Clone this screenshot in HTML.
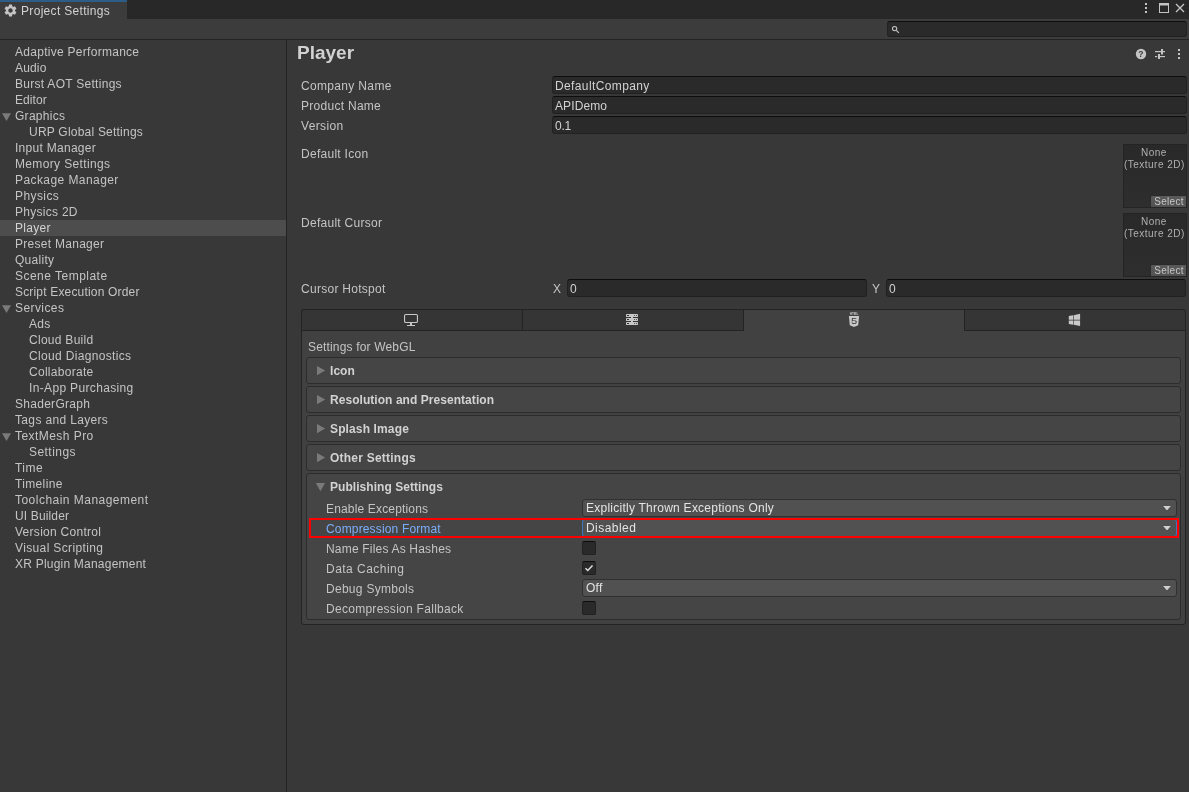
<!DOCTYPE html>
<html>
<head>
<meta charset="utf-8">
<title>Project Settings</title>
<style>
*{box-sizing:border-box;margin:0;padding:0}
html,body{width:1189px;height:792px;overflow:hidden;background:#383838}
body{will-change:transform;font-family:"Liberation Sans",sans-serif;font-size:12px;letter-spacing:.28px;color:#c4c4c4;position:relative}
.abs{position:absolute}
.t{position:absolute;white-space:nowrap;line-height:16px;height:16px}
/* dock tab bar */
#tabbar{left:0;top:0;width:1189px;height:19px;background:#282828}
#tab{left:0;top:0;width:127px;height:20px;background:#3c3c3c;border-top:2px solid #2c5d87}
#toolbar{left:0;top:19px;width:1189px;height:20px;background:#3c3c3c}
#hline{left:0;top:39px;width:1189px;height:1px;background:#232323}
#vline{left:286px;top:40px;width:1px;height:752px;background:#232323}
/* sidebar */
.si{left:15px;color:#c4c4c4}
.si.c{left:29px}
#sel{left:0;top:220px;width:286px;height:16px;background:#4d4d4d}
.arr{position:absolute;width:9px;height:7.800px;background:#7a7a7a;clip-path:polygon(0 0,100% 0,50% 100%)}
/* fields */
.tf{position:absolute;height:18px;background:#2a2a2a;border:1px solid #212121;border-top-color:#0d0d0d;border-radius:3px;color:#d2d2d2;line-height:16px;padding-left:2px;padding-top:1px;white-space:nowrap}
.lb{color:#c4c4c4}
.obj{position:absolute;width:64px;height:64px;background:linear-gradient(#292929,#2e2e2e);border:1px solid #242424;font-size:10px;letter-spacing:.48px;color:#b0b0b0;text-align:center;line-height:12px;padding-top:2.200px;padding-right:2px;white-space:nowrap}
.selb{position:absolute;right:0;bottom:0;width:36px;height:12px;background:linear-gradient(#5a5a5a,#525252);border:1px solid #2a2a2a;border-right:none;border-bottom:none;font-size:10px;line-height:11px;color:#c6c6c6;text-align:center;letter-spacing:.3px;border-radius:2px 0 0 0;padding-left:1px}
/* platform panel */
#panel{left:301px;top:309px;width:885px;height:316px;background:#414141;border:1px solid #232323;border-radius:3px}
.ptab{position:absolute;top:309px;height:22px;background:#353535;border:1px solid #232323}
.fold{position:absolute;left:306px;width:875px;height:27px;background:#454545;border:1px solid #2c2c2c;border-radius:3px}
.ft{font-weight:bold;letter-spacing:.05px;color:#d2d2d2;left:330px}
.rarr{position:absolute;width:8.200px;height:9.200px;background:#7a7a7a;clip-path:polygon(0 0,100% 50%,0 100%)}
.dd{position:absolute;left:582px;width:595px;height:18px;background:#515151;border:1px solid #303030;border-radius:3px;color:#e4e4e4;line-height:16px;padding-left:3px;white-space:nowrap}
.dd:after{content:"";position:absolute;right:5px;top:5.800px;width:8px;height:4.600px;background:#d0d0d0;clip-path:polygon(0 0,100% 0,50% 100%)}
.cb{position:absolute;left:582px;width:14px;height:14px;background:#2a2a2a;border:1px solid #212121;border-top-color:#0d0d0d;border-radius:2px}
.pl{left:326px;color:#c4c4c4}
</style>
</head>
<body>
<div class="abs" id="tabbar"></div>
<div class="abs" id="tab"></div>
<div class="abs" id="toolbar"></div>
<div class="abs" id="hline"></div>
<div class="abs" id="vline"></div>

<!-- tab title -->
<svg class="abs" style="left:3.400px;top:2.500px" width="15" height="15" viewBox="0 0 24 24"><path fill="#c4c4c4" d="M19.14 12.94c.04-.3.06-.61.06-.94 0-.32-.02-.64-.07-.94l2.03-1.58a.49.49 0 0 0 .12-.61l-1.92-3.32a.488.488 0 0 0-.59-.22l-2.39.96c-.5-.38-1.03-.7-1.62-.94l-.36-2.54a.484.484 0 0 0-.48-.41h-3.84c-.24 0-.43.17-.47.41l-.36 2.54c-.59.24-1.13.57-1.62.94l-2.39-.96c-.22-.08-.47 0-.59.22L2.74 8.87c-.12.21-.08.47.12.61l2.03 1.58c-.05.3-.09.63-.09.94s.02.64.07.94l-2.03 1.58a.49.49 0 0 0-.12.61l1.92 3.32c.12.22.37.29.59.22l2.39-.96c.5.38 1.03.7 1.62.94l.36 2.54c.05.24.24.41.48.41h3.84c.24 0 .44-.17.47-.41l.36-2.54c.59-.24 1.13-.56 1.62-.94l2.39.96c.22.08.47 0 .59-.22l1.92-3.32c.12-.22.07-.47-.12-.61l-2.01-1.58zM12 15.6c-1.98 0-3.600-1.620-3.600-3.600s1.620-3.600 3.600-3.600 3.600 1.620 3.600 3.600-1.620 3.600-3.600 3.600z"/></svg>
<div class="t" style="left:21px;top:3px;color:#d2d2d2;letter-spacing:.32px">Project Settings</div>

<!-- window buttons -->
<svg class="abs" style="left:1140px;top:0" width="49" height="18" viewBox="0 0 49 18">
<g fill="#c4c4c4"><rect x="5" y="3" width="2" height="2"/><rect x="5" y="7" width="2" height="2"/><rect x="5" y="11" width="2" height="2"/></g>
<rect x="19.500" y="3.500" width="9" height="9" fill="none" stroke="#c4c4c4"/><rect x="19" y="3" width="10" height="2.500" fill="#c4c4c4"/>
<path d="M36 4l8 8M44 4l-8 8" stroke="#c4c4c4" stroke-width="1.300" fill="none"/>
</svg>

<!-- search -->
<div class="abs" style="left:887px;top:21px;width:300px;height:16px;background:#2a2a2a;border:1px solid #212121;border-top-color:#0d0d0d;border-radius:3px"></div>
<svg class="abs" style="left:891px;top:25px" width="10" height="10" viewBox="0 0 10 10"><circle cx="3.600" cy="3.600" r="2.150" fill="none" stroke="#c4c4c4" stroke-width="1.100"/><path d="M5.300 5.300L7.900 7.900" stroke="#c4c4c4" stroke-width="1.200"/></svg>

<!-- sidebar -->
<div class="abs" id="sel"></div>
<div class="t si" style="top:44px">Adaptive Performance</div>
<div class="t si" style="top:60px;letter-spacing:0.155px">Audio</div>
<div class="t si" style="top:76px">Burst AOT Settings</div>
<div class="t si" style="top:92px;letter-spacing:0.060px">Editor</div>
<div class="arr" style="left:2px;top:113.3px"></div>
<div class="t si" style="top:108px">Graphics</div>
<div class="t si c" style="top:124px;letter-spacing:0.219px">URP Global Settings</div>
<div class="t si" style="top:140px">Input Manager</div>
<div class="t si" style="top:156px;letter-spacing:0.351px">Memory Settings</div>
<div class="t si" style="top:172px;letter-spacing:0.423px">Package Manager</div>
<div class="t si" style="top:188px;letter-spacing:0.413px">Physics</div>
<div class="t si" style="top:204px">Physics 2D</div>
<div class="t si" style="top:220px;color:#d2d2d2">Player</div>
<div class="t si" style="top:236px">Preset Manager</div>
<div class="t si" style="top:252px">Quality</div>
<div class="t si" style="top:268px;letter-spacing:0.480px">Scene Template</div>
<div class="t si" style="top:284px;letter-spacing:0.175px">Script Execution Order</div>
<div class="arr" style="left:2px;top:305.3px"></div>
<div class="t si" style="top:300px;letter-spacing:0.409px">Services</div>
<div class="t si c" style="top:316px">Ads</div>
<div class="t si c" style="top:332px">Cloud Build</div>
<div class="t si c" style="top:348px;letter-spacing:0.336px">Cloud Diagnostics</div>
<div class="t si c" style="top:364px">Collaborate</div>
<div class="t si c" style="top:380px;letter-spacing:0.342px">In-App Purchasing</div>
<div class="t si" style="top:396px">ShaderGraph</div>
<div class="t si" style="top:412px;letter-spacing:0.344px">Tags and Layers</div>
<div class="arr" style="left:2px;top:433.3px"></div>
<div class="t si" style="top:428px;letter-spacing:0.444px">TextMesh Pro</div>
<div class="t si c" style="top:444px;letter-spacing:0.451px">Settings</div>
<div class="t si" style="top:460px;letter-spacing:0.480px">Time</div>
<div class="t si" style="top:476px;letter-spacing:0.351px">Timeline</div>
<div class="t si" style="top:492px;letter-spacing:0.475px">Toolchain Management</div>
<div class="t si" style="top:508px;letter-spacing:0.141px">UI Builder</div>
<div class="t si" style="top:524px">Version Control</div>
<div class="t si" style="top:540px;letter-spacing:0.367px">Visual Scripting</div>
<div class="t si" style="top:556px;letter-spacing:0.217px">XR Plugin Management</div>

<!-- header -->
<div class="t" style="left:297px;top:41px;font-size:19px;font-weight:bold;letter-spacing:0;color:#d2d2d2;line-height:24px;height:24px">Player</div>
<svg class="abs" style="left:1134px;top:47px" width="52" height="14" viewBox="0 0 52 14">
<circle cx="7" cy="7" r="5.200" fill="#c4c4c4"/>
<text x="7" y="10" font-size="8.500" font-weight="bold" text-anchor="middle" fill="#383838" font-family="Liberation Sans, sans-serif">?</text>
<g fill="#c4c4c4"><rect x="21" y="4" width="6" height="1.200"/><rect x="29" y="4" width="2" height="1.200"/><rect x="27" y="2" width="2" height="5.500"/><rect x="21" y="9" width="2.200" height="1.200"/><rect x="26" y="9" width="5" height="1.200"/><rect x="24" y="7" width="2" height="5"/></g>
<g fill="#c4c4c4"><rect x="44" y="2" width="2" height="2"/><rect x="44" y="6" width="2" height="2"/><rect x="44" y="10" width="2" height="2"/></g>
</svg>

<!-- top fields -->
<div class="t lb" style="left:301px;top:78px;letter-spacing:0.335px">Company Name</div>
<div class="tf" style="left:552px;top:76px;width:635px;letter-spacing:0.380px">DefaultCompany</div>
<div class="t lb" style="left:301px;top:98px">Product Name</div>
<div class="tf" style="left:552px;top:96px;width:635px;letter-spacing:0.113px">APIDemo</div>
<div class="t lb" style="left:301px;top:118px;letter-spacing:0.363px">Version</div>
<div class="tf" style="left:552px;top:116px;width:635px;letter-spacing:-0.220px">0.1</div>

<div class="t lb" style="left:301px;top:146px">Default Icon</div>
<div class="obj" style="left:1123px;top:144px">None<br>(Texture 2D)<div class="selb">Select</div></div>
<div class="t lb" style="left:301px;top:215px">Default Cursor</div>
<div class="obj" style="left:1123px;top:213px">None<br>(Texture 2D)<div class="selb">Select</div></div>

<div class="t lb" style="left:301px;top:281px">Cursor Hotspot</div>
<div class="t lb" style="left:553px;top:281px">X</div>
<div class="tf" style="left:567px;top:279px;width:300px">0</div>
<div class="t lb" style="left:872px;top:281px">Y</div>
<div class="tf" style="left:886px;top:279px;width:300px">0</div>

<!-- platform panel -->
<div class="abs" id="panel"></div>
<div class="ptab" style="left:301px;width:222px;border-radius:3px 0 0 0"></div>
<div class="ptab" style="left:522px;width:222px"></div>
<div class="ptab" style="left:964px;width:222px;border-radius:0 3px 0 0"></div>

<!-- platform icons -->
<svg class="abs" style="left:403px;top:313px" width="16" height="14" viewBox="0 0 16 14"><rect x="1.550" y="1.550" width="12.900" height="7.900" rx="1.300" fill="none" stroke="#c8c8c8" stroke-width="1.100"/><rect x="7" y="10" width="2" height="2" fill="#c8c8c8"/><rect x="4" y="12" width="8" height="1" fill="#c8c8c8"/></svg>
<svg class="abs" style="left:626px;top:314px" width="13" height="12" viewBox="0 0 13 12"><g fill="#c8c8c8"><rect x="0" y="0" width="12" height="3" rx=".4"/><rect x="0" y="4" width="12" height="3" rx=".4"/><rect x="0" y="8" width="12" height="3" rx=".4"/><rect x="5" y="3" width="2" height="5"/></g><g fill="#2e2e2e"><rect x="1" y="1" width="2" height="1"/><rect x="8" y="1" width="1" height="1" fill="#555"/><rect x="10" y="1" width="1" height="1" fill="#555"/><rect x="1" y="5" width="2" height="1"/><rect x="8" y="5" width="1" height="1" fill="#555"/><rect x="10" y="5" width="1" height="1" fill="#555"/><rect x="1" y="9" width="2" height="1"/><rect x="8" y="9" width="1" height="1" fill="#555"/><rect x="10" y="9" width="1" height="1" fill="#555"/></g></svg>
<svg class="abs" style="left:848px;top:312px" width="12" height="16" viewBox="0 0 12 16"><text x="6" y="3.200" font-size="3" font-weight="bold" text-anchor="middle" fill="#c8c8c8" letter-spacing="0" font-family="Liberation Sans, sans-serif" textLength="8.600" lengthAdjust="spacingAndGlyphs">HTML</text><path d="M0.900 4h10.200l-0.900 9.300L6 14.900l-4.200-1.600z" fill="#c8c8c8"/><text transform="translate(6 12.100) scale(1.300 1)" x="0" y="0" font-size="8.600" text-anchor="middle" fill="#3a3a3a" letter-spacing="0" font-family="Liberation Sans, sans-serif">5</text></svg>
<svg class="abs" style="left:1068px;top:313px" width="13" height="14" viewBox="0 0 13 14"><path d="M0.800 3.100L5 2.300V6.700H0.800zM5.600 2.150L12.100 0.800V6.700H5.600zM0.800 7.500H5V11.700L0.800 10.900zM5.600 7.500H12.100V13L5.600 11.800z" fill="#c8c8c8"/></svg>

<div class="t" style="left:308px;top:339px;color:#c4c4c4;letter-spacing:0.168px">Settings for WebGL</div>

<div class="fold" style="top:357px"></div>
<div class="rarr" style="left:317px;top:366.0px"></div>
<div class="t ft" style="top:363px">Icon</div>
<div class="fold" style="top:386px"></div>
<div class="rarr" style="left:317px;top:395.0px"></div>
<div class="t ft" style="top:392px">Resolution and Presentation</div>
<div class="fold" style="top:415px"></div>
<div class="rarr" style="left:317px;top:424.0px"></div>
<div class="t ft" style="top:421px;letter-spacing:0.132px">Splash Image</div>
<div class="fold" style="top:444px"></div>
<div class="rarr" style="left:317px;top:453.0px"></div>
<div class="t ft" style="top:450px;letter-spacing:0.227px">Other Settings</div>
<div class="fold" style="top:473px;height:147px"></div>
<div class="arr" style="left:315.700px;top:482.700px;width:9.500px;height:8.500px"></div>
<div class="t ft" style="top:479px">Publishing Settings</div>

<div class="t pl" style="top:501px;letter-spacing:0.161px">Enable Exceptions</div>
<div class="dd" style="top:499px;letter-spacing:0.249px">Explicitly Thrown Exceptions Only</div>
<div class="t pl" style="top:521px;color:#7baefa;letter-spacing:0.156px">Compression Format</div>
<div class="dd" style="top:519px;border-color:#3a79bb;letter-spacing:0.451px">Disabled</div>
<div class="abs" style="left:309px;top:518px;width:870px;height:20px;border:2px solid #ff0000"></div>
<div class="t pl" style="top:541px;letter-spacing:0.191px">Name Files As Hashes</div>
<div class="cb" style="top:541px"></div>
<div class="t pl" style="top:561px;letter-spacing:0.471px">Data Caching</div>
<div class="cb" style="top:561px"></div>
<svg class="abs" style="left:584px;top:563px" width="10" height="10" viewBox="0 0 10 10"><path d="M1.500 5.200L3.800 7.500L8.500 2.500" fill="none" stroke="#e0e0e0" stroke-width="1.500"/></svg>
<div class="t pl" style="top:581px">Debug Symbols</div>
<div class="dd" style="top:579px">Off</div>
<div class="t pl" style="top:601px">Decompression Fallback</div>
<div class="cb" style="top:601px"></div>
</body>
</html>
